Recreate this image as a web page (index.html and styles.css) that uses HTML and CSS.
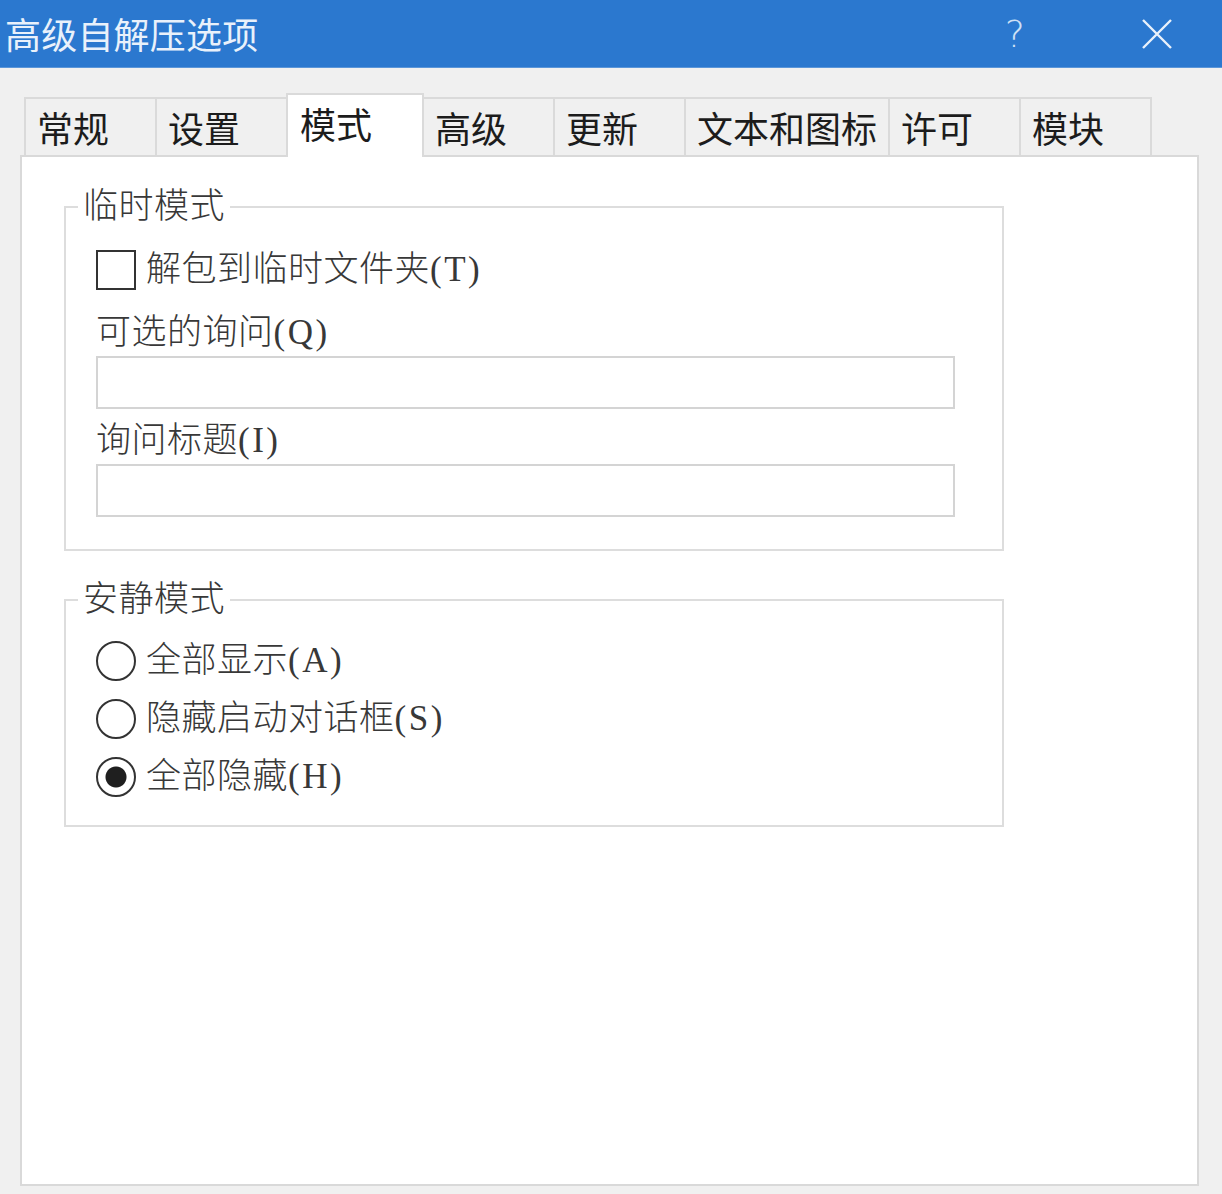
FILE: index.html
```html
<html>
<head>
<meta charset="utf-8">
<meta name="viewport" content="width=device-width, initial-scale=1" />
<title>高级自解压选项</title>
<link rel="stylesheet" href="styles.css">
</head>
<body>

<div class="titlebar">
    <span class="title">高级自解压选项</span>
    <span class="help">?</span>
    <svg class="close" width="32" height="32" viewBox="0 0 32 32">
        <path d="M2 2 L30 30 M30 2 L2 30" stroke="#e9f1fb" stroke-width="2.4" fill="none" />
    </svg>
</div>

<div class="tabs">
    <div class="tab">常规</div>
    <div class="tab">设置</div>
    <div class="tab active">模式</div>
    <div class="tab">高级</div>
    <div class="tab">更新</div>
    <div class="tab">文本和图标</div>
    <div class="tab">许可</div>
    <div class="tab">模块</div>
</div>

<div class="panel">
    <fieldset class="group temp">
        <legend>临时模式</legend>
        <div class="group-body">
            <label class="opt"><input type="checkbox" class="check"><span>解包到临时文件夹<span class="key">(T)</span></span></label>
            <div class="field-label">可选的询问<span class="key">(Q)</span></div>
            <input type="text" class="field">
            <div class="field-label">询问标题<span class="key">(I)</span></div>
            <input type="text" class="field">
        </div>
    </fieldset>

    <fieldset class="group silent">
        <legend>安静模式</legend>
        <div class="group-body">
            <label class="opt"><input type="radio" name="silent" class="radio"><span>全部显示<span class="key">(A)</span></span></label>
            <label class="opt"><input type="radio" name="silent" class="radio"><span>隐藏启动对话框<span class="key">(S)</span></span></label>
            <label class="opt"><input type="radio" name="silent" class="radio" checked><span>全部隐藏<span class="key">(H)</span></span></label>
        </div>
    </fieldset>
</div>

</body>
</html>
```

FILE: styles.css
```css
body { margin: 0; background: #f0f0f0; font-family: "Noto Sans CJK SC", sans-serif; color: #1c1c1c; width: 1222px; height: 1194px; overflow: hidden; }

.titlebar { display: flex; align-items: center; height: 67px; padding-left: 5px; background: #2b78cf; border-bottom: 1px solid #5b96d9; color: #e9f1fb; }
.titlebar .title { font-size: 36px; line-height: 67px; letter-spacing: 0.2px; }
.titlebar .help { margin-left: auto; font-family: "DejaVu Sans", sans-serif; font-weight: 200; font-size: 38px; color: #cfe0f5; }
.titlebar .close { margin: 0 49px 0 116px; }

.tabs { display: flex; align-items: flex-end; height: 64px; margin: 25px 0 -2px 24px; position: relative; z-index: 1; }
.tab { box-sizing: border-box; min-width: 133px; height: 58px; margin-bottom: 2px; padding: 0 11px; border: 2px solid #dadada; border-bottom: none; background: #f0f0f0; font-size: 36px; line-height: 56px; white-space: nowrap; }
.tab + .tab { margin-left: -2px; }
.tab.active { min-width: 138px; height: 64px; margin-bottom: 0; padding: 0 11px 6px 12px; background: #fff; position: relative; z-index: 2; }

.panel { box-sizing: border-box; width: 1179px; height: 1031px; margin-left: 20px; padding: 30px 0 0 42px; background: #fff; border: 2px solid #d9d9d9; }

.group { box-sizing: border-box; width: 940px; margin: 0; border: 2px solid #dddddd; padding: 0 46px 32px 12px; font-family: "Liberation Serif", "Noto Sans CJK SC", serif; font-weight: 300; color: #383838; }
.group legend { padding: 0 5px; font-size: 35px; line-height: 40px; letter-spacing: 0.5px; }
.group.silent { margin-top: 29px; padding-bottom: 28px; }
.group-body { display: flex; flex-direction: column; padding: 23px 0 0 18px; }
.group.silent .group-body { padding-top: 21px; gap: 18px; }

.opt { display: flex; align-items: center; gap: 10px; height: 40px; font-size: 35px; line-height: 40px; letter-spacing: 0.5px; }
.opt input { appearance: none; -webkit-appearance: none; box-sizing: border-box; flex: none; width: 40px; height: 40px; margin: 0; border: 2px solid #333; background: #fff; }
.opt .radio { border-radius: 50%; }
.opt .radio:checked { background: radial-gradient(circle, #1f1f1f 0 10px, #fff 11px); }
.key { letter-spacing: 2.5px; }

.field-label { margin-top: 23px; font-size: 35px; line-height: 40px; letter-spacing: 0.5px; }
.field { box-sizing: border-box; width: 859px; height: 53px; margin: 3px 0 0; border: 2px solid #d4d4d4; background: #fff; }
.field + .field-label { margin-top: 12px; }
```
